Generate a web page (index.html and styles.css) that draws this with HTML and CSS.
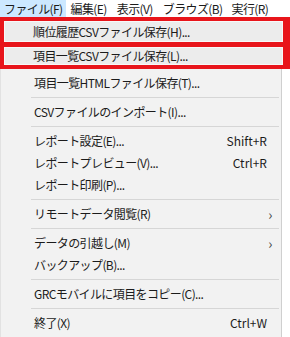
FILE: index.html
```html
<!DOCTYPE html>
<html lang="ja">
<head>
<meta charset="utf-8">
<link rel="stylesheet" href="styles.css">
</head>
<body>
<div class="screen">
  <div class="menubar">
    <span class="mb-item active mb-file">ファイル(F)</span>
    <span class="mb-item">編集(E)</span>
    <span class="mb-item">表示(V)</span>
    <span class="mb-item mb-browse">ブラウズ(B)</span>
    <span class="mb-item">実行(R)</span>
  </div>
  <div class="menu">
    <div class="annot">
      <div class="hl hl-1">順位履歴CSVファイル保存(H)...</div>
      <div class="annot-bar"></div>
      <div class="hl hl-2">項目一覧CSVファイル保存(L)...</div>
    </div>
    <div class="item first">項目一覧HTMLファイル保存(T)...</div>
    <div class="sep"></div>
    <div class="item">CSVファイルのインポート(I)...</div>
    <div class="sep"></div>
    <div class="item"><span>レポート設定(E)...</span><span class="key">Shift+R</span></div>
    <div class="item"><span>レポートプレビュー(V)...</span><span class="key">Ctrl+R</span></div>
    <div class="item">レポート印刷(P)...</div>
    <div class="sep"></div>
    <div class="item"><span>リモートデータ閲覧(R)</span><span class="arrow">›</span></div>
    <div class="sep"></div>
    <div class="item"><span>データの引越し(M)</span><span class="arrow">›</span></div>
    <div class="item">バックアップ(B)...</div>
    <div class="sep"></div>
    <div class="item">GRCモバイルに項目をコピー(C)...</div>
    <div class="sep"></div>
    <div class="item"><span>終了(X)</span><span class="key">Ctrl+W</span></div>
  </div>
</div>
</body>
</html>
```
FILE: styles.css
```css
html, body {
  margin: 0;
  padding: 0;
  background: #ffffff;
}
.screen {
  width: 290px;
  height: 337px;
  overflow: hidden;
  font-family: "Noto Sans CJK JP", "Noto Sans", sans-serif;
  font-size: 12px;
  letter-spacing: -0.6px;
  color: #1b1b1b;
}
.menubar {
  height: 17px;
  display: flex;
  align-items: stretch;
  background: #ffffff;
}
.mb-item {
  line-height: 17px;
  padding: 0 5px;
  white-space: nowrap;
  flex: none;
}
.mb-file {
  padding: 0 3px 0 4px;
}
.mb-browse {
  padding-right: 4px;
}
.mb-item.active {
  background: #cce8ff;
}
.menu {
  width: 282px;
  height: 320px;
  background: #f2f2f2;
  border-right: 1px solid #cfcfcf;
  border-left: 1px solid #e2e2e2;
  box-sizing: border-box;
}
.annot {
  margin-left: -1px;
  width: 290px;
  box-sizing: border-box;
  border: 4px solid #e8151b;
  border-right-width: 7px;
  background: #e8151b;
}
.annot-bar {
  height: 5px;
}
.hl {
  background: #ececec;
  border: 1px solid #f8f8f8;
  padding-left: 28px;
  white-space: nowrap;
  box-sizing: border-box;
}
.hl-1 {
  height: 21px;
  line-height: 19px;
}
.hl-2 {
  height: 18px;
  line-height: 16px;
}
.item {
  height: 22px;
  line-height: 22px;
  padding-left: 33px;
  padding-right: 14px;
  display: flex;
  justify-content: space-between;
  white-space: nowrap;
}
.item.first {
  margin-top: 3px;
}
.key {
  letter-spacing: 0;
  color: #1b1b1b;
}
.arrow {
  font-size: 14px;
  margin-right: -5px;
  color: #444;
}
.sep {
  height: 1px;
  background: #d6d6d6;
  margin: 3px 2px 3px 30px;
}
```
